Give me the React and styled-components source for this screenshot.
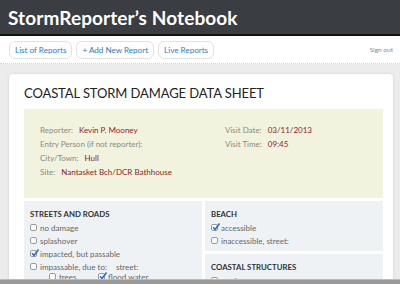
import React from 'react';
import styled, { createGlobalStyle } from 'styled-components';

const Global = createGlobalStyle`
  html, body {
    margin: 0;
    padding: 0;
    background: #ececec;
    font-family: Lato, "Open Sans", sans-serif;
    overflow: hidden;
  }
`;

const Header = styled.header`
  height: 34px;
  background: #3a3d42;
  border-bottom: 2px solid #111;
  display: flex;
  align-items: center;
  padding-left: 8px;
  h1 {
    margin: 0;
    color: #fff;
    font-size: 19px;
    font-weight: 700;
    letter-spacing: 0.1px;
  }
`;

const Nav = styled.nav`
  height: 27px;
  background: #fff;
  border-bottom: 1px dotted #d4d4d4;
  display: flex;
  align-items: center;
  padding: 0 7px 0 9px;
  gap: 4px;
`;

const NavButton = styled.a`
  height: 18px;
  padding: 0 5px;
  border: 1px solid #e2e2e2;
  border-radius: 6px;
  display: flex;
  align-items: center;
  font-size: 8.1px;
  color: #2c7dc4;
  box-sizing: border-box;
`;

const SignOut = styled.span`
  margin-left: auto;
  font-size: 6.5px;
  color: #888;
`;

const Page = styled.main`
  padding: 10px 7px 0 9px;
`;

const Card = styled.section`
  background: #fff;
  border-radius: 4px;
  box-shadow: 0 0 3px rgba(0, 0, 0, 0.12);
  padding: 11px 10px 0 15px;
  h2 {
    margin: 0 0 8px;
    font-size: 13px;
    font-weight: 400;
    color: #222;
    letter-spacing: -0.1px;
    line-height: 16px;
  }
`;

const Info = styled.div`
  background: #f1f3de;
  height: 89px;
  box-sizing: border-box;
  padding: 14px 16px;
  display: grid;
  grid-template-columns: 185px 1fr;
`;

const Column = styled.div`
  display: flex;
  flex-direction: column;
`;

const Field = styled.div`
  height: 14px;
  line-height: 14px;
  font-size: 8px;
  color: #8a8a80;
  span {
    color: #8e2424;
    margin-left: 6px;
  }
`;

const Sections = styled.div`
  margin-top: 3px;
  display: grid;
  grid-template-columns: 1fr 1fr;
  gap: 3px;
`;

const Stack = styled.div`
  display: flex;
  flex-direction: column;
  gap: 3px;
`;

const Section = styled.div`
  background: #eef2f5;
  padding: 8px 6px 2px;
  height: ${p => p.h || 'auto'};
  box-sizing: border-box;
  h3 {
    margin: 0 0 2px;
    font-size: 7.8px;
    font-weight: 700;
    color: #333;
    line-height: 10px;
  }
`;

const Check = styled.label`
  display: flex;
  align-items: center;
  gap: 3px;
  height: 13px;
  font-size: 8px;
  color: #666;
  padding-left: ${p => p.indent || 0}px;
  box-sizing: border-box;
  width: ${p => (p.w ? `${p.w}px` : 'auto')};
  em {
    font-style: normal;
    margin-left: 6px;
  }
`;

const Box = styled.span`
  width: 7px;
  height: 7px;
  border: 1px solid #999;
  border-radius: 2px;
  background: #fff;
  position: relative;
  flex: none;
  box-sizing: border-box;
  svg {
    position: absolute;
    left: 0;
    top: -2px;
  }
`;

const Pair = styled.div`
  display: flex;
  margin-top: -3px;
`;

const BottomBar = styled.div`
  position: fixed;
  left: 0;
  right: 0;
  bottom: 0;
  height: 4px;
  background: #9a9a9a;
  border-top: 1px solid #bbb;
`;

function CheckItem({ children, checked, indent, w }) {
  return (
    <Check indent={indent} w={w}>
      <Box>
        {checked && (
          <svg width="8" height="8" viewBox="0 0 8 8">
            <path d="M1 4.2 L3 6.5 L7.5 0.5" stroke="#2a6fc0" strokeWidth="1.6" fill="none" />
          </svg>
        )}
      </Box>
      {children}
    </Check>
  );
}

export default function App() {
  return (
    <>
      <Global />
      <Header>
        <h1>StormReporter’s Notebook</h1>
      </Header>
      <Nav>
        <NavButton>List of Reports</NavButton>
        <NavButton>+ Add New Report</NavButton>
        <NavButton>Live Reports</NavButton>
        <SignOut>Sign out</SignOut>
      </Nav>
      <Page>
        <Card>
          <h2>COASTAL STORM DAMAGE DATA SHEET</h2>
          <Info>
            <Column>
              <Field>Reporter:<span>Kevin P. Mooney</span></Field>
              <Field>Entry Person (if not reporter):</Field>
              <Field>City/Town:<span>Hull</span></Field>
              <Field>Site:<span>Nantasket Bch/DCR Bathhouse</span></Field>
            </Column>
            <Column>
              <Field>Visit Date:<span>03/11/2013</span></Field>
              <Field>Visit Time:<span>09:45</span></Field>
            </Column>
          </Info>
          <Sections>
            <Section>
              <h3>STREETS AND ROADS</h3>
              <CheckItem>no damage</CheckItem>
              <CheckItem>splashover</CheckItem>
              <CheckItem checked>impacted, but passable</CheckItem>
              <CheckItem>impassable, due to:<em>street:</em></CheckItem>
              <Pair>
                <CheckItem indent={19} w={68}>trees</CheckItem>
                <CheckItem checked>flood water</CheckItem>
              </Pair>
            </Section>
            <Stack>
              <Section h="50px">
                <h3>BEACH</h3>
                <CheckItem checked>accessible</CheckItem>
                <CheckItem>inaccessible, street:</CheckItem>
              </Section>
              <Section>
                <h3>COASTAL STRUCTURES</h3>
                <CheckItem>no damage</CheckItem>
              </Section>
            </Stack>
          </Sections>
        </Card>
      </Page>
      <BottomBar />
    </>
  );
}
